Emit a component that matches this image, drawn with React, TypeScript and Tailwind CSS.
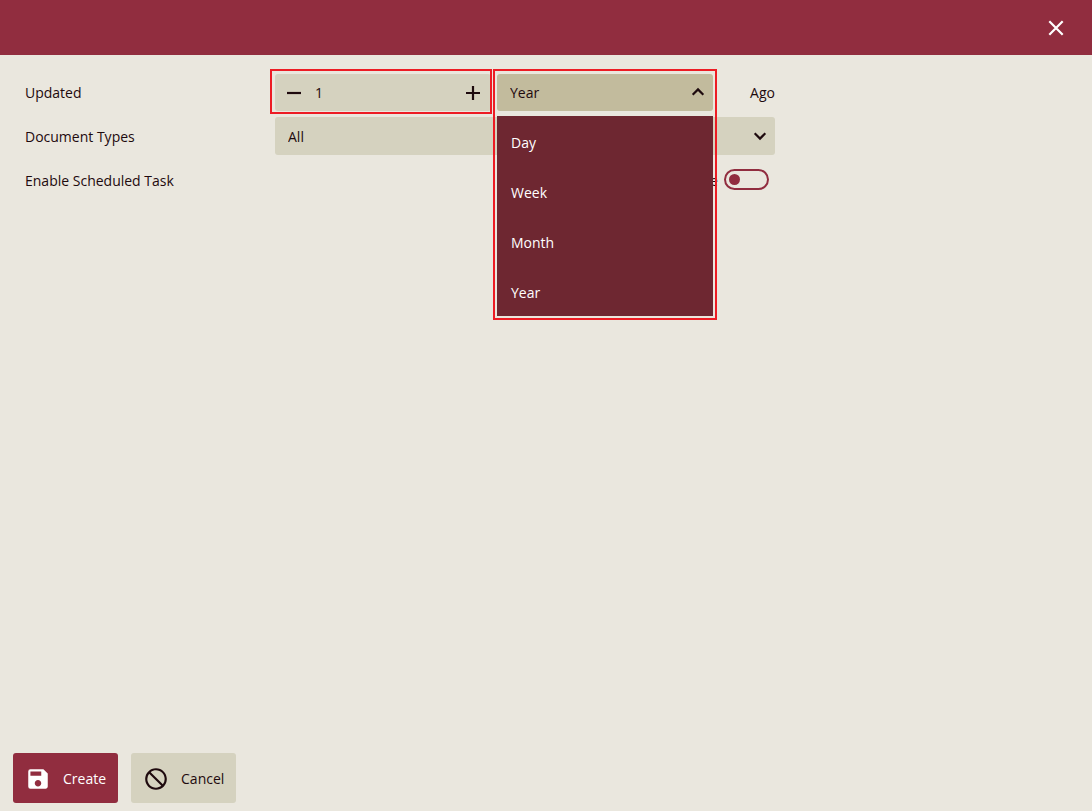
import React, { useState } from "react";
import { MdBlock, MdSave } from "react-icons/md";

const units = ["Day", "Week", "Month", "Year"];

const LineIcon = ({ d, className = "" }: { d: string; className?: string }) => (
  <svg
    viewBox="0 0 24 24"
    fill="none"
    stroke="currentColor"
    strokeWidth="2.2"
    aria-hidden="true"
    className={`size-6 ${className}`}
  >
    <path d={d} />
  </svg>
);

const App = () => {
  const [amount, setAmount] = useState("1");
  const [unit, setUnit] = useState("Year");
  const [open, setOpen] = useState(true);
  const [scheduled, setScheduled] = useState(false);

  const step = (by: number) =>
    setAmount(String(Math.max(1, (Number(amount) || 0) + by)));

  return (
    <div className="flex min-h-screen flex-col bg-[#eae7de] font-['Open_Sans','Noto_Sans',sans-serif] text-sm text-[#1e0a0e]">
      {/* Title bar */}
      <header className="flex h-[55px] shrink-0 items-center justify-end bg-[#912d3f] px-6">
        <button type="button" aria-label="Close" className="text-white">
          <LineIcon d="M5.3 5.3 18.7 18.7M18.7 5.3 5.3 18.7" />
        </button>
      </header>

      <main className="flex flex-col gap-1.5 px-[25px] pt-[18px]">
        {/* Updated */}
        <div className="flex h-[38px] items-end">
          <label
            htmlFor="amount"
            className="flex h-[37px] w-[250px] shrink-0 items-center"
          >
            Updated
          </label>
          <div className="flex w-full max-w-[500px] items-center gap-1.5">
            <div className="relative flex h-[37px] w-[216px] items-center rounded-[3px] bg-[#d5d2bf] pr-1.5 pl-[7px]">
              <button
                type="button"
                aria-label="Decrease"
                onClick={() => step(-1)}
              >
                <LineIcon d="M5 12h14" />
              </button>
              <input
                id="amount"
                type="text"
                inputMode="numeric"
                value={amount}
                onChange={(e) => setAmount(e.target.value)}
                className="min-w-0 flex-1 bg-transparent pl-[9px] outline-none"
              />
              <button
                type="button"
                aria-label="Increase"
                onClick={() => step(1)}
              >
                <LineIcon d="M5 12h14M12 5v14" />
              </button>
              <span className="pointer-events-none absolute -top-[5px] -right-px -bottom-[3px] -left-[5px] border-2 border-[#ed1c24]" />
            </div>

            <div className="relative h-[37px] w-[216px]">
              <select
                aria-label="Unit"
                value={unit}
                onChange={(e) => setUnit(e.target.value)}
                onMouseDown={(e) => {
                  e.preventDefault();
                  setOpen(!open);
                }}
                className="h-full w-full appearance-none rounded-[3px] bg-[#c2bb9d] px-[13px] outline-none"
              >
                {units.map((item) => (
                  <option key={item}>{item}</option>
                ))}
              </select>
              <LineIcon
                d="m6.7 14.7 5.3-5.3 5.3 5.3"
                className="pointer-events-none absolute top-1.5 right-[3px]"
              />
              {open && (
                <>
                  <ul className="absolute top-[42px] left-0 z-10 w-full bg-[#6e2731] text-white">
                    {units.map((item) => (
                      <li key={item}>
                        <button
                          type="button"
                          className="flex h-[50px] w-full items-center px-3.5 pt-1"
                          onClick={() => {
                            setUnit(item);
                            setOpen(false);
                          }}
                        >
                          {item}
                        </button>
                      </li>
                    ))}
                  </ul>
                  <span className="pointer-events-none absolute -top-[5px] -right-1 -left-1 z-10 h-[251px] border-2 border-[#ed1c24]" />
                </>
              )}
            </div>
            <span className="ml-auto">Ago</span>
          </div>
        </div>

        {/* Document types */}
        <div className="flex h-[38px] items-center">
          <label htmlFor="types" className="w-[250px] shrink-0 pt-0.5">
            Document Types
          </label>
          <div className="relative h-full w-full max-w-[500px]">
            <select
              id="types"
              className="h-full w-full appearance-none rounded-[3px] bg-[#d5d2bf] px-[13px] pt-0.5 outline-none"
            >
              <option>All</option>
            </select>
            <LineIcon
              d="m6.7 9.3 5.3 5.3 5.3-5.3"
              className="pointer-events-none absolute top-[7px] right-[3px]"
            />
          </div>
        </div>

        {/* Scheduled task */}
        <div className="flex h-[37px] items-center">
          <label htmlFor="scheduled" className="w-[250px] shrink-0 pt-0.5">
            Enable Scheduled Task
          </label>
          <div className="flex w-full max-w-[500px] items-center justify-end gap-1.5 pr-1.5">
            <span className="pt-0.5">{scheduled ? "Active" : "Inactive"}</span>
            <input
              id="scheduled"
              type="checkbox"
              role="switch"
              checked={scheduled}
              onChange={(e) => setScheduled(e.target.checked)}
              className="flex h-[21px] w-[45px] appearance-none items-center rounded-full border-2 border-[#912d3f] px-[3px] before:size-[11px] before:rounded-full before:bg-[#912d3f] checked:justify-end"
            />
          </div>
        </div>
      </main>

      {/* Actions */}
      <footer className="mt-auto flex gap-[13px] px-[13px] pb-2">
        <button
          type="button"
          className="flex h-[50px] items-center gap-3 rounded-[3px] bg-[#912d3f] px-3 pt-0.5 text-white"
        >
          <MdSave className="size-[26px]" />
          Create
        </button>
        <button
          type="button"
          className="flex h-[50px] items-center gap-3 rounded-[3px] bg-[#d5d2bf] px-3 pt-0.5"
        >
          <MdBlock className="size-[26px] -scale-x-100" />
          Cancel
        </button>
      </footer>
    </div>
  );
};

export default App;
